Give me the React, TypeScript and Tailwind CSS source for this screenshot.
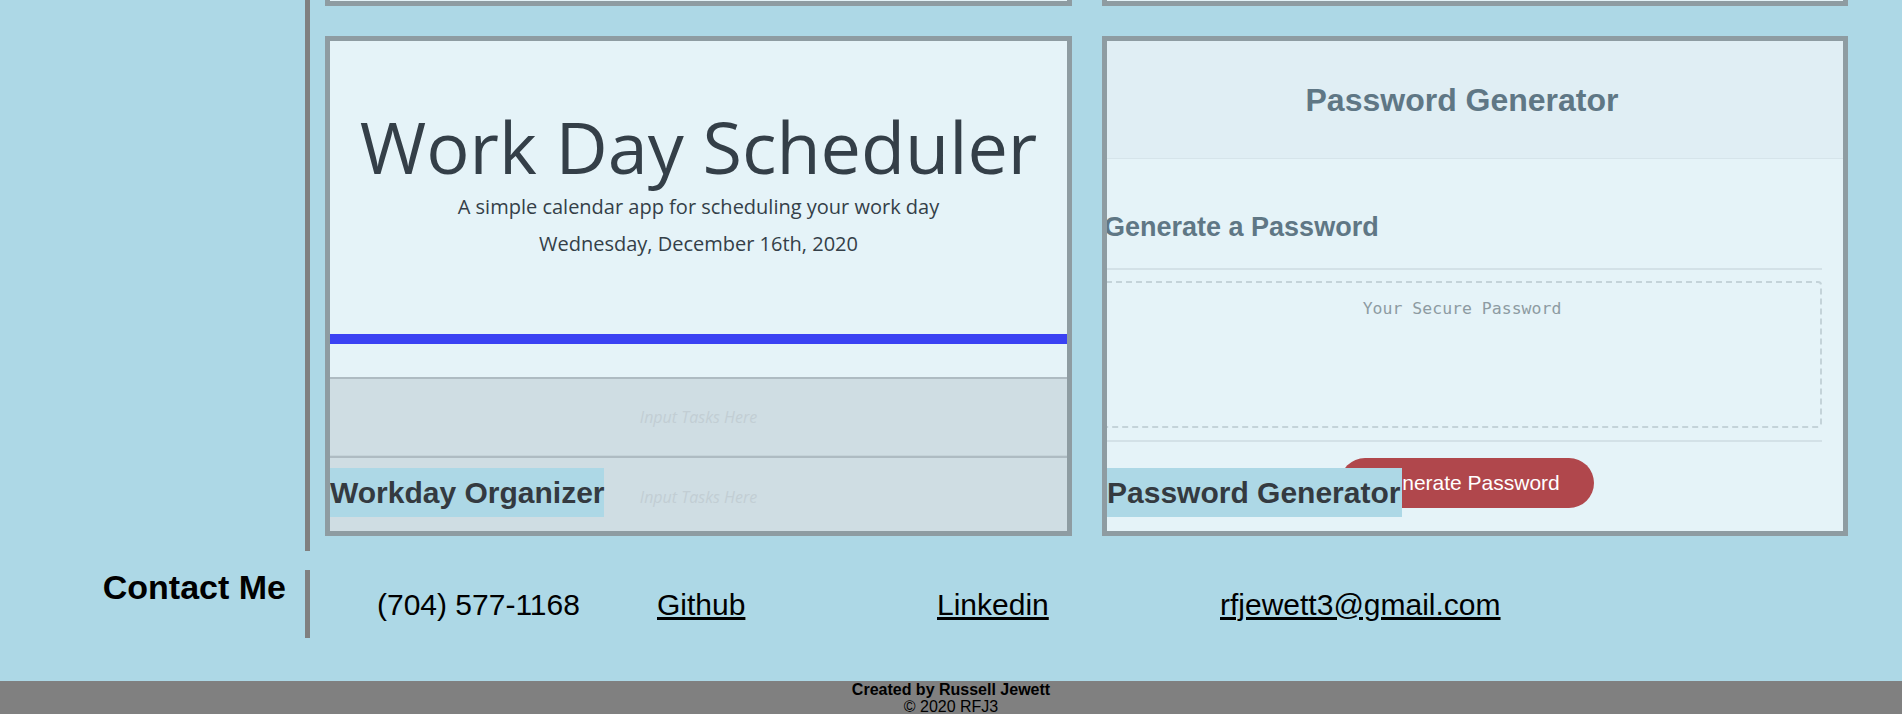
const sans = "font-['Liberation_Sans',Arial,sans-serif]";

function CardStrip() {
  // bottom edge of the previous row of project cards, scrolled off the top
  return <div className="h-[6px] border-x-[5px] border-b-[5px] border-[#8e9ca2] bg-[#e5f3f8]" />;
}

function Label({ text, className }: { text: string; className: string }) {
  return (
    <span
      className={`absolute bottom-[14px] left-0 h-[49px] bg-[#add8e6] text-[30px] leading-[49px] font-bold whitespace-nowrap text-[#343a40] ${className}`}
    >
      {text}
    </span>
  );
}

function SchedulerCard() {
  return (
    <div className="relative h-[500px] overflow-hidden border-[5px] border-[#8e9ca2] bg-[#e5f3f8]">
      <div className="flex h-[293px] flex-col items-center pt-[62px] font-['Open_Sans',sans-serif] text-[#343f48]">
        <h1 className="text-[72px] leading-[1.2] font-normal">Work Day Scheduler</h1>
        <p className="mt-[3px] text-[20px] leading-[30px] font-normal">A simple calendar app for scheduling your work day</p>
        <p className="mt-[7px] text-[20px] leading-[30px] font-normal">Wednesday, December 16th, 2020</p>
      </div>
      <div className="h-[10px] bg-[#3a42f3]" />
      <div className="h-[33px]" />
      <div className="flex h-[79px] items-center justify-center border-t-2 border-b border-t-[#aebbc2] border-b-[#c5d3d9] bg-[#cfdde3] font-['Open_Sans',sans-serif] text-[16px] italic text-[#c2ced4]">
        Input Tasks Here
      </div>
      <div className="flex h-[80px] items-center justify-center border-t-2 border-t-[#aebbc2] bg-[#cfdde3] font-['Open_Sans',sans-serif] text-[16px] italic text-[#c2ced4]">
        Input Tasks Here
      </div>
      <Label text="Workday Organizer" className="w-[274px]" />
    </div>
  );
}

function PasswordCard() {
  return (
    <div className="relative h-[500px] overflow-hidden border-[5px] border-[#8e9ca2] bg-[#e5f3f8]">
      <div className="flex h-[118px] items-center justify-center border-b border-[#d6e4ea] bg-[#e0eef4] pr-[26px]">
        <h1 className="text-[32px] font-bold text-[#5f7785]">Password Generator</h1>
      </div>
      <div className="mr-[21px] ml-[-5px]">
        <h2 className="mt-[52px] ml-[2px] text-[27px] leading-[32px] font-bold text-[#5f7785]">Generate a Password</h2>
        <div className="mt-[25px] h-[2px] bg-[#d3e1e7]" />
        <div className="mt-[11px] h-[147px] rounded-[4px] border-2 border-dashed border-[#c4d3d9] pt-[14px] text-center font-['DejaVu_Sans_Mono',monospace] text-[16.5px] leading-[1.5] text-[#8d9ba2]">
          Your Secure Password
        </div>
        <div className="mt-[12px] h-[2px] bg-[#d3e1e7]" />
        <div className="mt-[16px] flex justify-center pl-[10px]">
          <button className="h-[50px] w-[254px] rounded-full bg-[#b0474c] text-[21px] text-white">Generate Password</button>
        </div>
      </div>
      <Label text="Password Generator" className="w-[295px]" />
    </div>
  );
}

export default function App() {
  return (
    <div className={`min-h-[714px] bg-[#add8e6] text-black ${sans}`}>
      <section className="flex">
        <div className="w-[305px] shrink-0" />
        <div className="border-l-[5px] border-[#808080] pb-[15px] pl-[15px]">
          <div className="grid grid-cols-[747px_746px] gap-[30px]">
            <CardStrip />
            <CardStrip />
            <SchedulerCard />
            <PasswordCard />
          </div>
        </div>
      </section>

      <section className="mt-[19px] flex">
        <div className="w-[305px] shrink-0 pr-[19px] text-right">
          <h2 className="text-[34px] leading-[34px] font-bold">Contact Me</h2>
        </div>
        <div className="flex h-[68px] items-center border-l-[5px] border-[#808080] pl-[67px]">
          <div className="grid grid-cols-[280px_280px_283px_auto] text-[30px]">
            <span>(704) 577-1168</span>
            <a href="#" className="w-fit underline">Github</a>
            <a href="#" className="w-fit underline">Linkedin</a>
            <a href="#" className="w-fit underline">rfjewett3@gmail.com</a>
          </div>
        </div>
      </section>

      <footer className="mt-[43px] bg-[#808080] text-center text-[16px] leading-[17px]">
        <p className="font-bold">Created by Russell Jewett</p>
        <p>© 2020 RFJ3</p>
      </footer>
    </div>
  );
}
